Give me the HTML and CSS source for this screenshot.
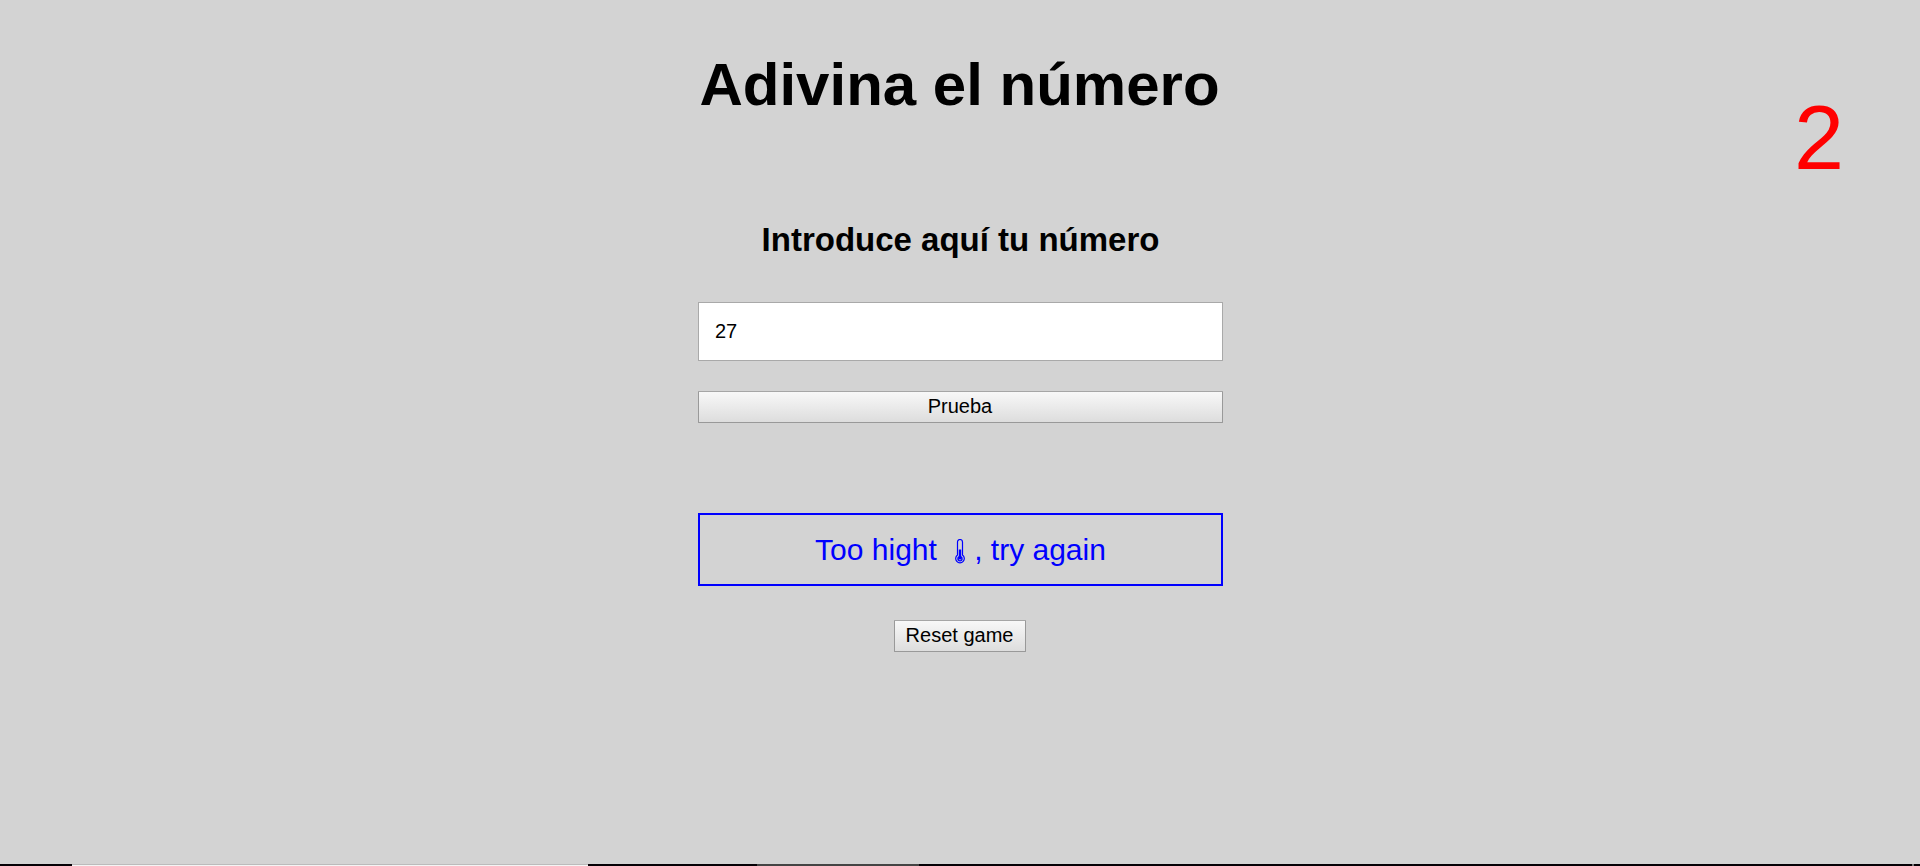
FILE: index.html
```
<!DOCTYPE html>
<html lang="es">
<head>
<meta charset="utf-8">
<title>Adivina el número</title>
<link rel="stylesheet" href="styles.css">
</head>
<body>
<div class="page">
  <main class="game">
    <h1 class="title">Adivina el número</h1>
    <label class="prompt" for="guess">Introduce aquí tu número</label>
    <input class="guess" id="guess" type="text" value="27">
    <button class="button try" type="button">Prueba</button>
    <p class="hint"><span>Too hight&nbsp;</span><svg class="thermo" viewBox="0 0 10 25" width="10" height="25"><path d="M2.5 16V3a2.5 2.5 0 0 1 5 0v13a4.3 4.3 0 1 1-5 0Z" fill="none" stroke="currentColor" stroke-width="1.2"/><circle cx="5" cy="19.7" r="2.7" fill="currentColor"/><path d="M5 10.5v8" stroke="currentColor" stroke-width="2.4"/><path d="M3.8 20.2q1.2 1.6 2.5 0" fill="none" stroke="lightgray" stroke-width=".7"/></svg><span>, try again</span></p>
    <button class="button reset" type="button">Reset game</button>
  </main>
  <aside class="attempts">2</aside>
</div>
<footer class="taskbar"><i class="search"></i><i class="active"></i><i class="edge"></i></footer>
</body>
</html>
```
FILE: styles.css
```
* { box-sizing: border-box; }
body {
  margin: 0;
  height: 866px;
  display: flex;
  flex-direction: column;
  overflow: hidden;
  background: lightgray;
  color: #000;
  font-family: "Liberation Sans", Arial, sans-serif;
}
.page {
  flex: 1;
  display: grid;
  grid-template-columns: 698px 525px 1fr;
}
.game {
  grid-column: 2;
  display: flex;
  flex-direction: column;
  align-items: center;
}
.title {
  margin: 50px 2px 0 0;
  font-size: 60px;
  line-height: 70px;
  white-space: nowrap;
}
.prompt {
  margin-top: 101px;
  font-size: 33px;
  font-weight: bold;
  line-height: 38px;
  white-space: nowrap;
}
.guess {
  width: 100%;
  height: 59px;
  margin: 43px 0 30px;
  padding: 0 16px 1px;
  border: 1px solid #a9a9a9;
  border-radius: 0;
  background: #fff;
  font: 20px "Liberation Sans", Arial, sans-serif;
}
.button {
  height: 32px;
  padding: 0 1px 2px 0;
  border: 1px solid #999;
  border-top-color: #a6a6a6;
  border-radius: 1px;
  background: linear-gradient(#f8f8f8, #ddd);
  color: #000;
  font: 20px/28px "Liberation Sans", Arial, sans-serif;
}
.try { width: 100%; }
.hint {
  width: 100%;
  height: 73px;
  margin: 90px 0 34px;
  border: 2px solid blue;
  display: flex;
  justify-content: center;
  align-items: center;
  color: blue;
  font-size: 30px;
  white-space: pre;
}
.thermo { margin: 4px 9px 0 10px; }
.reset { width: 132px; margin-right: 1px; }
.attempts {
  justify-self: end;
  margin: 86px 76px 0 0;
  color: red;
  font-size: 90px;
  line-height: 104px;
}
.taskbar {
  height: 2px;
  display: grid;
  grid-template-columns: 72px 516px 169px 162px 993px 2px 6px;
  background: #050005;
}
.search { grid-column: 2; background: linear-gradient(#bbb 50%, #f4f4f4 50%); }
.active { grid-column: 4; background: #444; }
.edge { grid-column: 6; background: #777; }
```
